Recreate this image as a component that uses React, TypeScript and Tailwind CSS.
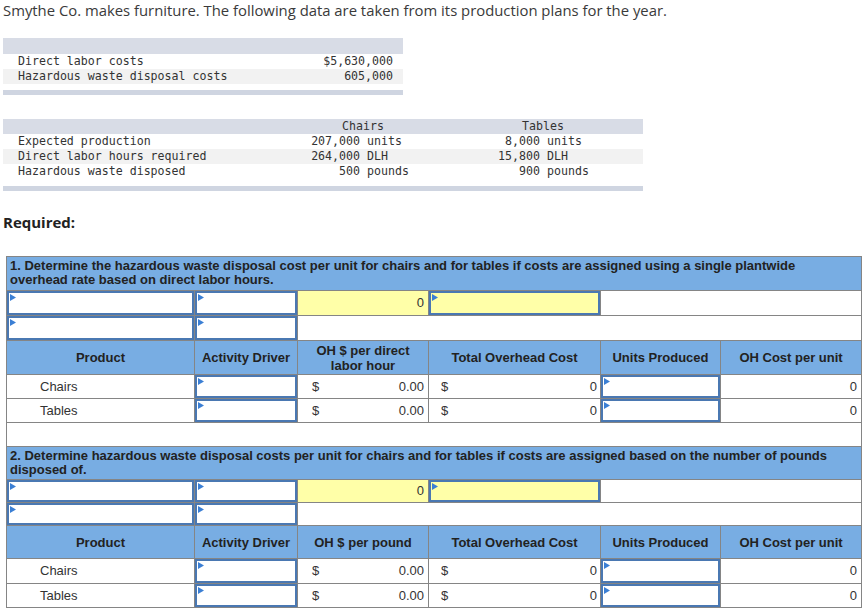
import React from "react";

const Flag = () => (
  <svg
    className="absolute left-[1px] top-[1px]"
    width="6"
    height="8"
    viewBox="0 0 6 8"
  >
    <polygon points="0,0 6,3.5 0,7" fill="#3b7fd4" />
  </svg>
);

const InputBox = ({ h, yellow }: { h: number; yellow?: boolean }) => (
  <div
    className={`relative w-full border-2 border-[#4a78b2] ${yellow ? "bg-[#ffffa8]" : "bg-white"}`}
    style={{ height: h }}
  >
    <Flag />
  </div>
);

const cell = "border border-[#858585] p-0";
const head =
  "border border-[#858585] bg-[#78ade3] font-bold text-[13px] leading-[15px] text-[#222] text-center";

type SectionProps = {
  title: React.ReactNode;
  rateLabel: React.ReactNode;
  h: { title: number; in1: number; in2: number; head: number; r1: number; r2: number };
  spacer?: boolean;
};

const Section = ({ title, rateLabel, h, spacer }: SectionProps) => (
  <>
    <tr style={{ height: h.title }}>
      <td
        colSpan={6}
        className="border border-[#858585] bg-[#78ade3] px-[3px] py-[2px] align-top font-bold text-[13px] leading-[14px] text-[#222]"
      >
        {title}
      </td>
    </tr>
    <tr style={{ height: h.in1 }}>
      <td className={cell}>
        <InputBox h={h.in1 - 1} />
      </td>
      <td className={cell}>
        <InputBox h={h.in1 - 1} />
      </td>
      <td className={`${cell} bg-[#ffffa8] text-right pr-[4px] text-[13px] text-[#333]`}>0</td>
      <td className={cell}>
        <InputBox h={h.in1 - 1} yellow />
      </td>
      <td colSpan={2} className={cell}></td>
    </tr>
    <tr style={{ height: h.in2 }}>
      <td className={cell}>
        <InputBox h={h.in2 - 1} />
      </td>
      <td className={cell}>
        <InputBox h={h.in2 - 1} />
      </td>
      <td colSpan={4} className={cell}></td>
    </tr>
    <tr style={{ height: h.head }}>
      <td className={head}>Product</td>
      <td className={head}>Activity Driver</td>
      <td className={head}>{rateLabel}</td>
      <td className={head}>Total Overhead Cost</td>
      <td className={head}>Units Produced</td>
      <td className={head}>OH Cost per unit</td>
    </tr>
    {[
      ["Chairs", h.r1],
      ["Tables", h.r2],
    ].map(([name, rh]) => (
      <tr key={name as string} style={{ height: rh as number }} className="text-[13px] text-[#333]">
        <td className={`${cell} pl-[33px]`}>{name}</td>
        <td className={cell}>
          <InputBox h={(rh as number) - 1} />
        </td>
        <td className={cell}>
          <div className="flex justify-between pl-[14px] pr-[4px]">
            <span>$</span>
            <span>0.00</span>
          </div>
        </td>
        <td className={cell}>
          <div className="flex justify-between pl-[12px] pr-[3px]">
            <span>$</span>
            <span>0</span>
          </div>
        </td>
        <td className={cell}>
          <InputBox h={(rh as number) - 1} />
        </td>
        <td className={`${cell} text-right pr-[4px]`}>0</td>
      </tr>
    ))}
    {spacer && (
      <tr className="h-[24px]">
        <td colSpan={6} className={cell}></td>
      </tr>
    )}
  </>
);

export default function App() {
  const mono = "font-['DejaVu_Sans_Mono',monospace] text-[11.6px] leading-[15px] text-[#333]";

  return (
    <div className="w-[863px] h-[611px] overflow-hidden bg-white">
      <p className="pl-[3px] font-['Open_Sans',sans-serif] text-[14.85px] leading-[20px] text-[#3a3a3a]">
        Smythe Co. makes furniture. The following data are taken from its production plans for the year.
      </p>

      {/* cost data */}
      <div className={`ml-[3px] mt-[18px] w-[400px] ${mono}`}>
        <div className="h-[16px] bg-[#d8dce6]" />
        <div className="flex h-[15px] items-center pl-[15px] pr-[10px]">
          <span className="flex-1">Direct labor costs</span>
          <span>$5,630,000</span>
        </div>
        <div className="flex h-[15px] items-center bg-[#f2f2f2] pl-[15px] pr-[10px]">
          <span className="flex-1">Hazardous waste disposal costs</span>
          <span>605,000</span>
        </div>
        <div className="h-[6px]" />
        <div className="h-[5px] bg-[#cfd5e1]" />
      </div>

      {/* production data */}
      <div className={`ml-[3px] mt-[24px] w-[640px] ${mono}`}>
        <div className="grid h-[15px] grid-cols-[297px_150px_193px] items-center bg-[#d8dce6]">
          <span />
          <span className="pl-[42px]">Chairs</span>
          <span className="pl-[72px]">Tables</span>
        </div>
        {[
          ["Expected production", "207,000", "units", "8,000", "units", ""],
          ["Direct labor hours required", "264,000", "DLH", "15,800", "DLH", "bg-[#f2f2f2]"],
          ["Hazardous waste disposed", "500", "pounds", "900", "pounds", ""],
        ].map(([label, c, cu, t, tu, bg]) => (
          <div
            key={label}
            className={`grid h-[15px] grid-cols-[288px_69px_113px_67px_103px] items-center ${bg}`}
          >
            <span className="pl-[15px]">{label}</span>
            <span className="text-right">{c}</span>
            <span className="pl-[7px]">{cu}</span>
            <span className="text-right">{t}</span>
            <span className="pl-[7px]">{tu}</span>
          </div>
        ))}
        <div className="h-[7px]" />
        <div className="h-[5px] bg-[#cfd5e1]" />
      </div>

      <p className="mt-[21px] pl-[3px] font-['Open_Sans',sans-serif] text-[15px] font-bold leading-[20px] text-[#222]">
        Required:
      </p>

      <table className="ml-[6px] mt-[24px] w-[855px] table-fixed border-collapse font-['Liberation_Sans',Arial,sans-serif]">
        <colgroup>
          <col className="w-[188px]" />
          <col className="w-[103px]" />
          <col className="w-[131px]" />
          <col className="w-[172px]" />
          <col className="w-[120px]" />
          <col className="w-[141px]" />
        </colgroup>
        <tbody>
          <Section
            title={
              <>
                1.  Determine the hazardous waste disposal cost per unit for chairs and for tables if costs are assigned using a single plantwide
                <br />
                overhead rate based on direct labor hours.
              </>
            }
            rateLabel={
              <>
                OH $ per direct
                <br />
                labor hour
              </>
            }
            h={{ title: 34, in1: 25, in2: 25, head: 34, r1: 24, r2: 24 }}
            spacer
          />
          <Section
            title="2.  Determine hazardous waste disposal costs per unit for chairs and for tables if costs are assigned based on the number of pounds disposed of."
            rateLabel="OH $ per pound"
            h={{ title: 32, in1: 23, in2: 23, head: 33, r1: 25, r2: 24 }}
          />
        </tbody>
      </table>
    </div>
  );
}
